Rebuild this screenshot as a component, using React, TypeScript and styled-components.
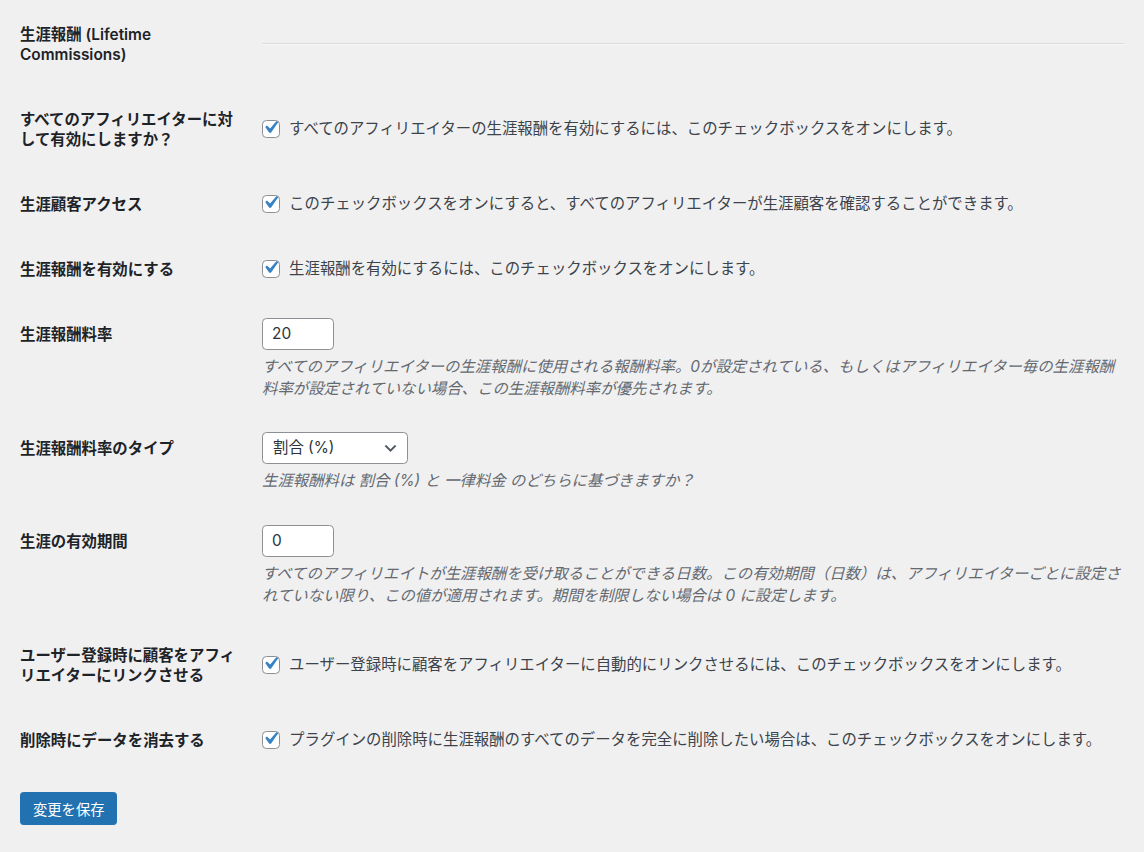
import styled, { createGlobalStyle } from 'styled-components';

const GlobalStyle = createGlobalStyle`
  html, body {
    margin: 0;
    padding: 0;
    background: #f0f0f1;
  }
  body {
    font-family: Inter, "Noto Sans CJK JP", sans-serif;
    font-size: 15.4px;
    color: #3c434a;
  }
`;

type Field =
  | { kind: 'checkbox'; label: string; text: string }
  | { kind: 'number'; label: string; value: string; description: string }
  | { kind: 'select'; label: string; value: string; description: string };

const fields: Field[] = [
  {
    kind: 'checkbox',
    label: 'すべてのアフィリエイターに対して有効にしますか？',
    text: 'すべてのアフィリエイターの生涯報酬を有効にするには、このチェックボックスをオンにします。',
  },
  {
    kind: 'checkbox',
    label: '生涯顧客アクセス',
    text: 'このチェックボックスをオンにすると、すべてのアフィリエイターが生涯顧客を確認することができます。',
  },
  {
    kind: 'checkbox',
    label: '生涯報酬を有効にする',
    text: '生涯報酬を有効にするには、このチェックボックスをオンにします。',
  },
  {
    kind: 'number',
    label: '生涯報酬料率',
    value: '20',
    description:
      'すべてのアフィリエイターの生涯報酬に使用される報酬料率。0が設定されている、もしくはアフィリエイター毎の生涯報酬料率が設定されていない場合、この生涯報酬料率が優先されます。',
  },
  {
    kind: 'select',
    label: '生涯報酬料率のタイプ',
    value: '割合 (%)',
    description: '生涯報酬料は 割合 (%) と 一律料金 のどちらに基づきますか？',
  },
  {
    kind: 'number',
    label: '生涯の有効期間',
    value: '0',
    description:
      'すべてのアフィリエイトが生涯報酬を受け取ることができる日数。この有効期間（日数）は、アフィリエイターごとに設定されていない限り、この値が適用されます。期間を制限しない場合は 0 に設定します。',
  },
  {
    kind: 'checkbox',
    label: 'ユーザー登録時に顧客をアフィリエイターにリンクさせる',
    text: 'ユーザー登録時に顧客をアフィリエイターに自動的にリンクさせるには、このチェックボックスをオンにします。',
  },
  {
    kind: 'checkbox',
    label: '削除時にデータを消去する',
    text: 'プラグインの削除時に生涯報酬のすべてのデータを完全に削除したい場合は、このチェックボックスをオンにします。',
  },
];

const CheckMark = () => (
  <svg width="25" height="25" viewBox="0 0 20 20">
    <path d="M14.83 4.89l1.34.94-5.81 8.38H9.02L5.78 9.67l1.34-1.25 2.57 2.4z" fill="#3582c4" />
  </svg>
);

const Chevron = () => (
  <svg width="17" height="17" viewBox="0 0 20 20">
    <path d="M5 6l5 5 5-5 2 1-7 7-7-7 2-1z" fill="#50575e" />
  </svg>
);

const renderControl = (field: Field) => {
  if (field.kind === 'checkbox') {
    return (
      <CheckLabel>
        <Checkbox>
          <CheckMark />
        </Checkbox>
        {field.text}
      </CheckLabel>
    );
  }
  return (
    <>
      {field.kind === 'number' ? (
        <NumberInput>{field.value}</NumberInput>
      ) : (
        <Select>
          {field.value}
          <Chevron />
        </Select>
      )}
      <Description>{field.description}</Description>
    </>
  );
};

export default function App() {
  return (
    <>
      <GlobalStyle />
      <Page>
        <Row>
          <Label>生涯報酬 (Lifetime Commissions)</Label>
          <Cell>
            <Rule />
          </Cell>
        </Row>
        {fields.map((field) => (
          <Row key={field.label}>
            <Label>{field.label}</Label>
            <Cell>{renderControl(field)}</Cell>
          </Row>
        ))}
        <Submit>
          <Button>変更を保存</Button>
        </Submit>
      </Page>
    </>
  );
}

const Page = styled.div`
  padding: 2px 9px 20px 20px;
`;

const Row = styled.div`
  display: grid;
  grid-template-columns: 231px 1fr;
`;

const Label = styled.div`
  align-self: start;
  padding: 22.5px 11px 22.5px 0;
  line-height: 20px;
  font-weight: 600;
  color: #1d2327;
`;

const Cell = styled.div`
  align-self: center;
  padding: 15.5px 11px 17px;
  line-height: 22px;
`;

const Rule = styled.div`
  border-top: 1px solid #dcdcde;
  border-bottom: 1px solid #f6f7f7;
`;

const CheckLabel = styled.div`
  display: flex;
  align-items: center;
  gap: 9.5px;
`;

const Checkbox = styled.span`
  flex: none;
  width: 17.6px;
  height: 17.6px;
  box-sizing: border-box;
  border: 1px solid #8c8f94;
  border-radius: 4.4px;
  background: #fff;
  display: flex;
  align-items: center;
  justify-content: center;

  svg {
    flex: none;
    margin: -3px 0 0 -1px;
  }
`;

const NumberInput = styled.div`
  width: 72px;
  height: 32px;
  box-sizing: border-box;
  border: 1px solid #8c8f94;
  border-radius: 4.4px;
  background: #fff;
  padding: 0 9px;
  display: flex;
  align-items: center;
  color: #2c3338;
`;

const Select = styled.div`
  width: 146px;
  height: 32px;
  box-sizing: border-box;
  border: 1px solid #8c8f94;
  border-radius: 4.4px;
  background: #fff;
  padding: 0 8px 0 10px;
  display: flex;
  align-items: center;
  justify-content: space-between;
  color: #2c3338;
`;

const Description = styled.p`
  margin: 6px 0 0;
  font-style: italic;
  color: #646970;
  line-height: 22px;
`;

const Submit = styled.div`
  padding-top: 18px;
`;

const Button = styled.button`
  height: 33px;
  padding: 0 12px;
  border: 1px solid #2271b1;
  border-radius: 3.3px;
  background: #2271b1;
  color: #fff;
  font-family: inherit;
  font-size: 14.3px;
`;
